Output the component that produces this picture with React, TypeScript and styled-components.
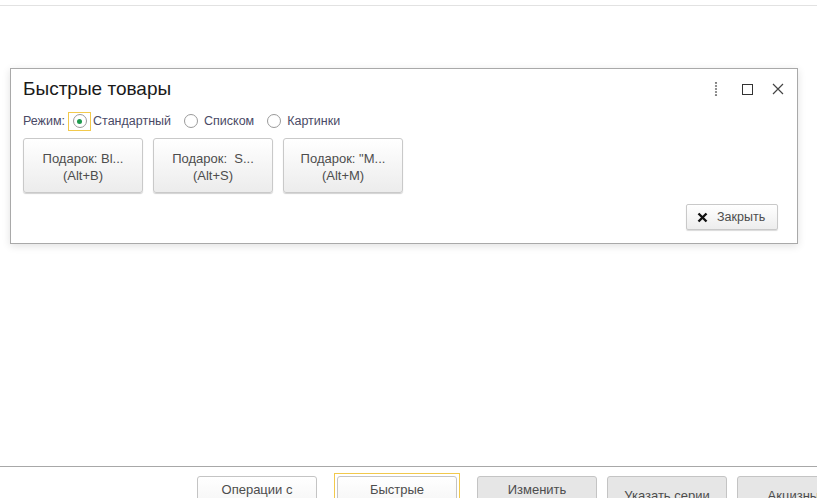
import React from 'react';
import styled, { createGlobalStyle } from 'styled-components';

const GlobalStyle = createGlobalStyle`
  html, body {
    margin: 0;
    padding: 0;
    background: #fff;
    font-family: 'Liberation Sans', Arial, sans-serif;
  }
`;

const Page = styled.div`
  display: flex;
  flex-direction: column;
  width: 817px;
  height: 498px;
  overflow: hidden;
  background: #fff;
`;

const TopStrip = styled.div`
  height: 5px;
  border-bottom: 1px solid #e2e2e2;
`;

const DialogArea = styled.div`
  padding: 62px 19px 0 10px;
`;

const Dialog = styled.section`
  border: 1px solid #a9a9a9;
  background: #fff;
  box-shadow: 0 2px 8px rgba(0, 0, 0, 0.12);
  padding: 8px 12px 12px 12px;
  height: 176px;
  box-sizing: border-box;
`;

const Header = styled.div`
  display: flex;
  align-items: center;
  height: 24px;
`;

const Title = styled.h1`
  flex: 1;
  margin: 0;
  font-size: 19px;
  font-weight: normal;
  color: #1a1a1a;
`;

const HeaderIcons = styled.div`
  display: flex;
  align-items: center;
  gap: 15px;
  margin-right: -1px;
`;

const IconButton = styled.span`
  display: flex;
  width: 16px;
  height: 16px;
  align-items: center;
  justify-content: center;
`;

const ModeRow = styled.div`
  display: flex;
  align-items: center;
  margin-top: 10px;
  font-size: 12.5px;
  color: #4a4a66;
  height: 20px;
`;

const ModeLabel = styled.span`
  margin-right: 3px;
`;

const RadioOption = styled.label`
  display: flex;
  align-items: center;
  margin-right: 8px;
`;

const RadioFrame = styled.span<{ $focused?: boolean }>`
  display: flex;
  align-items: center;
  justify-content: center;
  width: 23px;
  height: 19px;
  box-sizing: border-box;
  border: 1px solid ${(p) => (p.$focused ? '#f2c94c' : 'transparent')};
  margin-right: 2px;
`;

const RadioCircle = styled.span`
  display: flex;
  align-items: center;
  justify-content: center;
  width: 14px;
  height: 14px;
  box-sizing: border-box;
  border: 1px solid #9a9a9a;
  border-radius: 50%;
  background: #fff;
`;

const RadioDot = styled.span`
  width: 5px;
  height: 5px;
  border-radius: 50%;
  background: #1e9a4e;
`;

const GiftRow = styled.div`
  display: flex;
  gap: 10px;
  margin-top: 7px;
`;

const GiftButton = styled.button`
  width: 120px;
  height: 55px;
  box-sizing: border-box;
  border: 1px solid #c9c9c9;
  border-radius: 3px;
  background: linear-gradient(#ffffff, #ececec);
  box-shadow: 0 1px 1px rgba(0, 0, 0, 0.18);
  font-family: inherit;
  font-size: 13px;
  line-height: 17px;
  color: #4d4d4d;
  padding: 3px 4px 0;
  white-space: pre;
`;

const FooterRow = styled.div`
  display: flex;
  justify-content: flex-end;
  margin-top: 11px;
  margin-right: 7px;
`;

const CloseButton = styled.button`
  display: flex;
  align-items: center;
  gap: 9px;
  width: 92px;
  height: 26px;
  box-sizing: border-box;
  padding: 0 10px;
  border: 1px solid #c9c9c9;
  border-radius: 2px;
  background: linear-gradient(#ffffff, #ededed);
  box-shadow: 0 1px 1px rgba(0, 0, 0, 0.15);
  font-family: inherit;
  font-size: 12.5px;
  color: #4d4d4d;
`;

const Spacer = styled.div`
  flex: 1;
`;

const BottomBar = styled.div`
  height: 31px;
  border-top: 1px solid #a8a8a8;
  display: flex;
  align-items: flex-start;
  padding-left: 197px;
  gap: 10px;
`;

const FocusFrame = styled.div`
  border: 1px solid #f2c94c;
  padding: 2px;
  margin: 6px 7px 0 7px;
  display: flex;
`;

const BarButton = styled.button<{ $muted?: boolean; $low?: boolean; $top?: number }>`
  flex-shrink: 0;
  width: 120px;
  height: 40px;
  box-sizing: border-box;
  margin-top: ${(p) => p.$top ?? 9}px;
  border: 1px solid #c4c4c4;
  border-radius: 3px;
  background: ${(p) => (p.$muted ? '#e6e6e6' : 'linear-gradient(#ffffff, #f2f2f2)')};
  font-family: inherit;
  font-size: 13px;
  color: #4d4d4d;
  display: flex;
  justify-content: center;
  align-items: flex-start;
  padding-top: ${(p) => (p.$low ? 11 : 5)}px;
`;

const gifts = [
  { name: 'Подарок: Bl...', key: '(Alt+B)' },
  { name: 'Подарок:  S...', key: '(Alt+S)' },
  { name: 'Подарок: "M...', key: '(Alt+M)' },
];

function MoreIcon() {
  return (
    <svg width="4" height="14" viewBox="0 0 4 14">
      {[1, 4, 7, 10, 13].map((y) => (
        <circle key={y} cx="2" cy={y} r="1.1" fill="#777" />
      ))}
    </svg>
  );
}

export default function App() {
  return (
    <Page>
      <GlobalStyle />
      <TopStrip />
      <DialogArea>
        <Dialog>
          <Header>
            <Title>Быстрые товары</Title>
            <HeaderIcons>
              <IconButton>
                <MoreIcon />
              </IconButton>
              <IconButton>
                <svg width="11" height="11" viewBox="0 0 11 11">
                  <rect x="0.5" y="0.5" width="10" height="10" fill="none" stroke="#333" />
                </svg>
              </IconButton>
              <IconButton>
                <svg width="12" height="12" viewBox="0 0 12 12">
                  <path d="M1 1 L11 11 M11 1 L1 11" stroke="#444" strokeWidth="1.2" />
                </svg>
              </IconButton>
            </HeaderIcons>
          </Header>
          <ModeRow>
            <ModeLabel>Режим:</ModeLabel>
            <RadioOption>
              <RadioFrame $focused>
                <RadioCircle>
                  <RadioDot />
                </RadioCircle>
              </RadioFrame>
              Стандартный
            </RadioOption>
            <RadioOption>
              <RadioFrame>
                <RadioCircle />
              </RadioFrame>
              Списком
            </RadioOption>
            <RadioOption>
              <RadioFrame>
                <RadioCircle />
              </RadioFrame>
              Картинки
            </RadioOption>
          </ModeRow>
          <GiftRow>
            {gifts.map((g) => (
              <GiftButton key={g.key}>
                {g.name}
                {'\n'}
                {g.key}
              </GiftButton>
            ))}
          </GiftRow>
          <FooterRow>
            <CloseButton>
              <svg width="11" height="11" viewBox="0 0 11 11">
                <path d="M1.5 1.5 L9.5 9.5 M9.5 1.5 L1.5 9.5" stroke="#111" strokeWidth="2.4" />
              </svg>
              Закрыть
            </CloseButton>
          </FooterRow>
        </Dialog>
      </DialogArea>
      <Spacer />
      <BottomBar>
        <BarButton>Операции с</BarButton>
        <FocusFrame>
          <BarButton $top={0}>Быстрые</BarButton>
        </FocusFrame>
        <BarButton $muted>Изменить</BarButton>
        <BarButton $muted $low>Указать серии</BarButton>
        <BarButton $muted $low>Акцизные</BarButton>
      </BottomBar>
    </Page>
  );
}
